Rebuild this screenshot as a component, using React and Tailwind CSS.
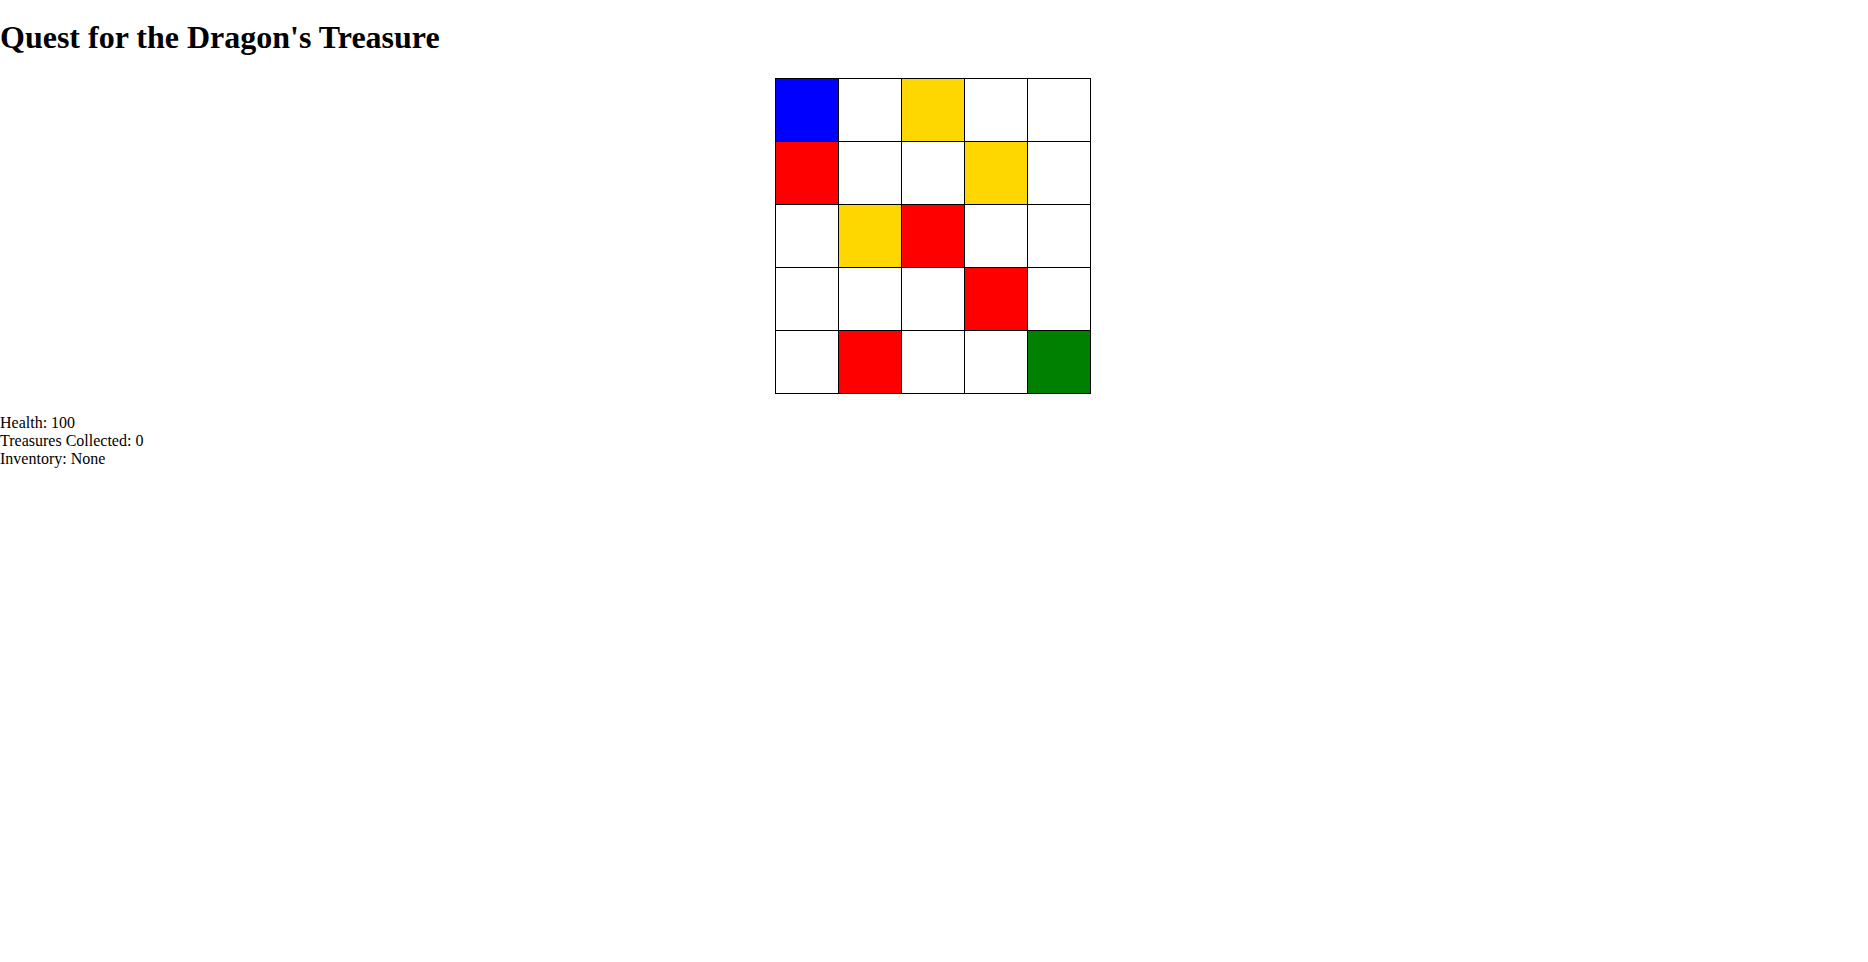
import React from 'react';

const board = [
  ['blue', 'empty', 'gold', 'empty', 'empty'],
  ['red', 'empty', 'empty', 'gold', 'empty'],
  ['empty', 'gold', 'red', 'empty', 'empty'],
  ['empty', 'empty', 'empty', 'red', 'empty'],
  ['empty', 'red', 'empty', 'empty', 'green'],
];

const cellColor = {
  blue: 'bg-[#0000ff]',
  red: 'bg-[#ff0000]',
  gold: 'bg-[#ffd700]',
  green: 'bg-[#008000]',
  empty: 'bg-white',
};

const App = () => (
  <div className="min-h-screen bg-white text-black font-['Liberation_Serif',serif]">
    <h1 className="text-[32px] font-bold leading-[37px] pt-[19px] mb-[22px]">
      Quest for the Dragon's Treasure
    </h1>
    <div className="flex justify-center">
      <div className="grid grid-cols-5 border-l border-t border-black ml-[-2px]">
        {board.flat().map((c, i) => (
          <div key={i} className={`w-[63px] h-[63px] border-r border-b border-black ${cellColor[c]}`} />
        ))}
      </div>
    </div>
    <div className="mt-[20px] text-[16px] leading-[18px]">
      <div>Health: 100</div>
      <div>Treasures Collected: 0</div>
      <div>Inventory: None</div>
    </div>
  </div>
);

export default App;
